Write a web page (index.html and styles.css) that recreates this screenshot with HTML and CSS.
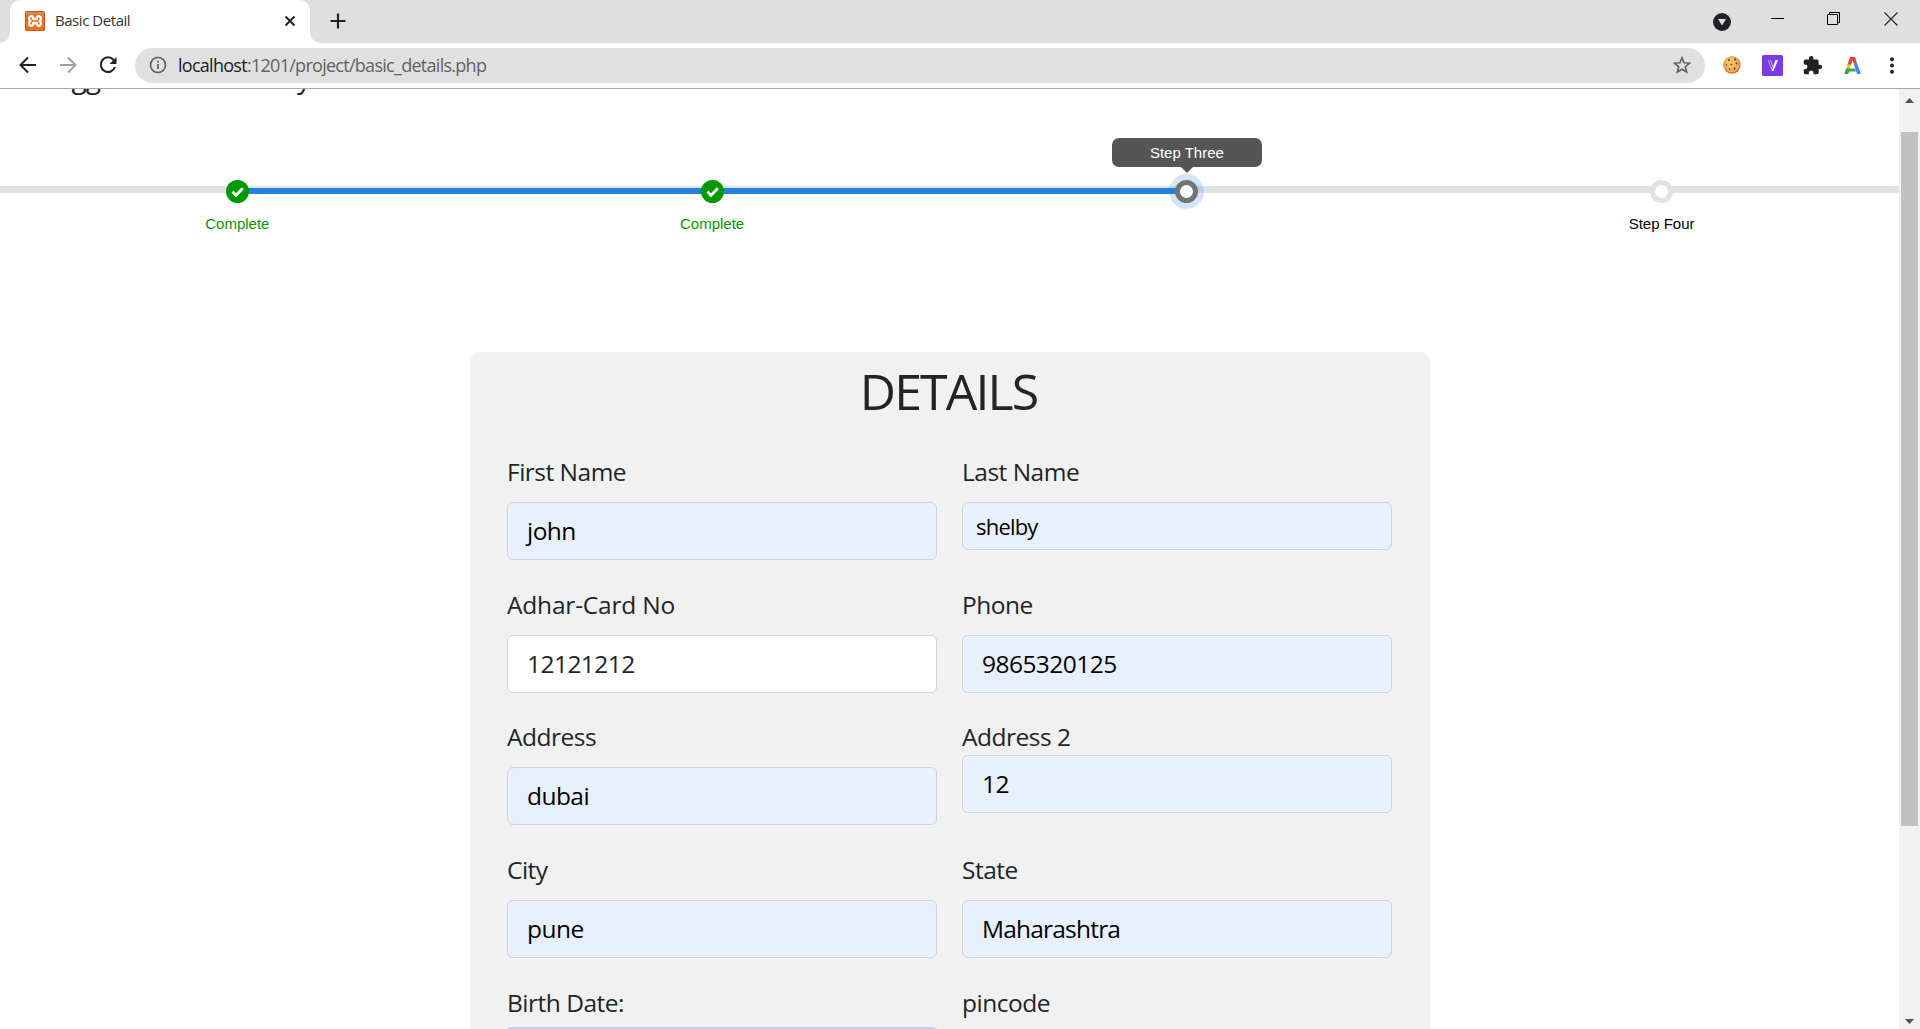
FILE: index.html
```html
<!DOCTYPE html>
<html lang="en">
<head>
<meta charset="utf-8">
<title>Basic Detail</title>
<link rel="stylesheet" href="styles.css">
</head>
<body>
<div class="browser">
  <header class="tabstrip">
    <div class="tab">
      <svg class="favicon" width="20" height="20" viewBox="0 0 20 20"><rect width="20" height="20" rx="1.5" fill="#f0701f"/><rect x=".5" y=".5" width="19" height="19" rx="1.5" fill="none" stroke="#c4571a"/><rect x="1" y="1" width="18" height="2.5" fill="#d98a60"/><path d="M8.200 8V6.500L6.800 5.200H5.500L4.200 6.500v2L5.500 10l-1.300 1.500v2l1.300 1.300h1.300l1.400-1.300V12h3.600v1.500l1.400 1.300h1.300l1.300-1.300v-2L14.500 10l1.300-1.500v-2l-1.300-1.300h-1.300l-1.400 1.300V8z" fill="none" stroke="#fff" stroke-width="2.300" stroke-linejoin="round"/></svg>
      <span class="tab-title">Basic Detail</span>
      <svg class="tab-close" width="12" height="12" viewBox="0 0 12 12"><path d="M1.500 1.500l9 9M10.500 1.500l-9 9" stroke="#202124" stroke-width="2"/></svg>
    </div>
    <svg class="new-tab" width="16" height="16" viewBox="0 0 16 16"><path d="M8 .5v15M.5 8h15" stroke="#202124" stroke-width="2.200"/></svg>
    <div class="window-buttons">
      <svg width="18" height="18" viewBox="0 0 18 18"><circle cx="9" cy="9" r="9" fill="#202124"/><path d="M5 6h8l-4 6.500z" fill="#dfdfdf"/></svg>
      <svg width="13" height="13" viewBox="0 0 13 13"><path d="M0 6.500h13" stroke="#000"/></svg>
      <svg width="13" height="13" viewBox="0 0 13 13"><path d="M.5 2.500h10v10H.5zM2.500 2.500v-2h10v10h-2" fill="none" stroke="#000"/></svg>
      <svg width="14" height="14" viewBox="0 0 14 14"><path d="M.5.5l13 13M13.500.5l-13 13" stroke="#222" stroke-width="1.100"/></svg>
    </div>
  </header>
  <nav class="toolbar">
    <div class="nav-icons">
      <svg width="18" height="18" viewBox="0 0 18 18"><path d="M17 9H2M9 1.500L1.500 9 9 16.500" fill="none" stroke="#202124" stroke-width="2"/></svg>
      <svg width="18" height="18" viewBox="0 0 18 18"><path d="M1 9h15M9 1.500L16.500 9 9 16.500" fill="none" stroke="#9e9fa1" stroke-width="2"/></svg>
      <svg width="18" height="18" viewBox="0 0 18 18"><path d="M14.700 4A7.300 7.300 0 1 0 16 11" fill="none" stroke="#202124" stroke-width="2"/><path d="M17.500 1v7h-7z" fill="#202124"/></svg>
    </div>
    <div class="omnibox">
      <svg width="18" height="18" viewBox="0 0 18 18"><circle cx="9" cy="9" r="7.500" fill="none" stroke="#5f6368" stroke-width="1.700"/><path d="M9 8v5M9 4.700v1.900" stroke="#5f6368" stroke-width="1.800"/></svg>
      <span class="url"><b>localhost</b>:1201/project/basic_details.php</span>
      <svg class="star" width="18" height="18" viewBox="0 0 18 18"><path d="M9 1.800l2 5 5.400.4-4.100 3.500 1.300 5.300L9 13.200 4.400 16l1.300-5.300-4.100-3.500L7 6.800z" fill="none" stroke="#5f6368" stroke-width="1.700"/></svg>
    </div>
    <div class="extensions">
      <svg width="18" height="18" viewBox="0 0 18 18"><circle cx="9" cy="9" r="8.700" fill="#c97929"/><circle cx="8.700" cy="8.300" r="7.900" fill="#edab55"/><circle cx="8" cy="7" r="5.500" fill="#f4bd70"/><g fill="#65361c"><circle cx="6" cy="4" r=".9"/><circle cx="12" cy="3.500" r=".9"/><circle cx="3.500" cy="9" r=".8"/><circle cx="8.500" cy="8.500" r=".8"/><circle cx="13.500" cy="7.500" r=".9"/><circle cx="11.500" cy="12.500" r="1"/><circle cx="6.500" cy="13" r=".8"/></g></svg>
      <svg width="21" height="21" viewBox="0 0 21 21"><rect width="21" height="21" rx="1.500" fill="#7b39ea"/><path d="M6 5l4.500 11M8.500 5l2.500 7" fill="none" stroke="#c9aff8" stroke-width="1"/><path d="M9.500 16L13.500 5H16l-4.500 11z" fill="#fff"/></svg>
      <svg width="21" height="21" viewBox="0 0 24 24"><path fill="#202124" d="M20.500 11H19V7a2 2 0 0 0-2-2h-4V3.500a2.500 2.500 0 0 0-5 0V5H4a2 2 0 0 0-2 2v3.800h1.500a2.700 2.700 0 0 1 0 5.400H2V20a2 2 0 0 0 2 2h3.800v-1.500a2.700 2.700 0 0 1 5.400 0V22H17a2 2 0 0 0 2-2v-4h1.500a2.500 2.500 0 0 0 0-5z"/></svg>
      <svg width="17" height="17" viewBox="0 0 17 17"><path d="M6 0h5l2 6H9.500L8.500 3l-1.500 5H3.500z" fill="#ea4335"/><path d="M9.500 6H13l3.700 11H13z" fill="#4285f4"/><path d="M3.700 7.500H7L4 17H.3z" fill="#fbbc04"/><path d="M2 11.500h9l1 3H5.200L4 17H.3z" fill="#34a853"/></svg>
      <svg width="4" height="17" viewBox="0 0 4 17"><g fill="#202124"><circle cx="2" cy="2.200" r="2"/><circle cx="2" cy="8.500" r="2"/><circle cx="2" cy="14.800" r="2"/></g></svg>
    </div>
  </nav>
  <div class="viewport">
    <main class="page">
      <h3 class="welcome">Logged in Successfully</h3>
      <ol class="steps">
        <li class="step done"><svg class="dot" width="23" height="23" viewBox="0 0 23 23"><circle cx="11.500" cy="11.500" r="11.500" fill="#090"/><path d="M6.500 11.500l3.500 4 6.800-7.300" fill="none" stroke="#fff" stroke-width="2.800"/></svg><span>Complete</span></li>
        <li class="step done"><svg class="dot" width="23" height="23" viewBox="0 0 23 23"><circle cx="11.500" cy="11.500" r="11.500" fill="#090"/><path d="M6.500 11.500l3.500 4 6.800-7.300" fill="none" stroke="#fff" stroke-width="2.800"/></svg><span>Complete</span></li>
        <li class="step active"><i class="dot ring"></i><span class="tooltip">Step Three</span></li>
        <li class="step"><i class="dot ring"></i><span>Step Four</span></li>
      </ol>
      <form class="card">
        <h1>DETAILS</h1>
        <div class="grid">
          <div class="field"><label>First Name</label><div class="input filled">john</div></div>
          <div class="field"><label>Last Name</label><div class="input filled small">shelby</div></div>
          <div class="field"><label class="wide">Adhar-Card No</label><div class="input">12121212</div></div>
          <div class="field"><label>Phone</label><div class="input filled">9865320125</div></div>
          <div class="field"><label>Address</label><div class="input filled">dubai</div></div>
          <div class="field tight"><label>Address 2</label><div class="input filled">12</div></div>
          <div class="field"><label>City</label><div class="input filled">pune</div></div>
          <div class="field"><label>State</label><div class="input filled long">Maharashtra</div></div>
          <div class="field"><label>Birth Date:</label><div class="input focused"></div></div>
          <div class="field"><label>pincode</label><div class="input"></div></div>
        </div>
      </form>
    </main>
    <div class="scrollbar">
      <svg width="9" height="5" viewBox="0 0 9 5"><path d="M0 5L4.500 0 9 5z" fill="#505050"/></svg>
      <div class="thumb"></div>
      <svg class="down" width="9" height="5" viewBox="0 0 9 5"><path d="M0 0l4.500 5L9 0z" fill="#505050"/></svg>
    </div>
  </div>
</div>
</body>
</html>
```
FILE: styles.css
```css
* { box-sizing: border-box; }
body { margin: 0; background: #fff; color: #212529; font-family: "Open Sans", "Noto Sans", sans-serif; }
svg { display: block; flex: none; }

.browser { display: flex; flex-direction: column; height: 1029px; overflow: hidden; }

.tabstrip { display: flex; height: 43px; flex: none; background: #dfdfdf; padding-left: 10px; }
.tab { position: relative; display: flex; align-items: center; width: 300px; height: 43px; padding: 0 14px 1px 15px; background: #fff; border-radius: 10px 10px 0 0; }
.tab::before, .tab::after { content: ""; position: absolute; bottom: 0; width: 10px; height: 10px; }
.tab::before { left: -10px; background: radial-gradient(circle at 0 0, #dfdfdf 9.500px, #fff 10px); }
.tab::after { right: -10px; background: radial-gradient(circle at 100% 0, #dfdfdf 9.500px, #fff 10px); }
.tab-title { margin: -2px 0 0 10px; font-size: 15px; letter-spacing: -.45px; color: #333; }
.tab-close { margin-left: auto; }
.new-tab { margin: 13px 0 0 20px; }
.window-buttons { display: flex; margin-left: auto; padding-right: 22px; }
.window-buttons svg { margin-top: 12px; }
.window-buttons svg:nth-child(1) { margin-top: 13px; margin-right: 40px; }
.window-buttons svg:nth-child(2) { margin-right: 43px; }
.window-buttons svg:nth-child(3) { margin-right: 44px; }

.toolbar { display: flex; align-items: center; height: 46px; flex: none; padding: 0 7px 1px 19px; border-bottom: 1px solid #a9a9a9; }
.nav-icons { display: flex; gap: 22px; width: 116px; }
.omnibox { display: flex; align-items: center; width: 1570px; height: 35px; padding: 0 14px; border-radius: 18px; background: #e0e0e0; }
.url { margin-left: 11px; font-size: 18px; letter-spacing: -.72px; color: #5f6368; }
.url b { font-weight: inherit; color: #202124; }
.star { margin-left: auto; }
.extensions { display: grid; grid-template-columns: repeat(5, 40px); place-items: center; padding-left: 7px; }

.viewport { display: flex; flex: 1; min-height: 0; }
.page { flex: 1; overflow: hidden; }
.welcome { margin: -31px 0 0 42px; height: 40px; line-height: 38px; font-size: 28px; font-weight: 400; letter-spacing: -1px; }

.steps { display: flex; height: 56px; margin: 82px 0 0; padding: 0; list-style: none; font: 15px/20px "Liberation Sans", Arial, sans-serif; color: #000;
  background: linear-gradient(#dfe3e4, #dfe3e4) 0 6px / 100% 7px no-repeat; }
.step { position: relative; flex: 1; display: flex; flex-direction: column; align-items: center; gap: 11px; }
.steps .step:nth-child(-n+2)::after { content: ""; position: absolute; left: 50%; top: 8px; width: 100%; height: 6px; background: #2183dd; }
.done { color: #090; }
.dot { position: relative; z-index: 2; width: 23px; height: 23px; flex: none; }
.ring { border: 5px solid #dfe3e4; border-radius: 50%; background: #fff; }
.active .ring { border-color: #747474; box-shadow: 0 0 0 6px rgba(33,131,221,.2); }
.tooltip { position: absolute; top: -42px; width: 150px; height: 29px; line-height: 29px; border-radius: 7px; background: #555; color: #fff; text-align: center; }
.tooltip::after { content: ""; position: absolute; left: 69px; top: 29px; border: 6px solid transparent; border-top-color: #555; border-bottom: 0; }

.card { width: 960px; margin: 116px auto 0; padding: 8px 37.500px 0; border-radius: 10px; background: #f1f1f1; }
h1 { margin: 0; height: 84px; line-height: 62px; text-align: center; text-indent: -2px; font-size: 50px; font-weight: 400; letter-spacing: -1.900px; }
.grid { display: grid; grid-template-columns: 430px 430px; column-gap: 25px; grid-auto-rows: 132.700px; }
.field { display: flex; flex-direction: column; align-items: stretch; }
label { height: 58px; line-height: 55px; font-size: 24.500px; letter-spacing: -.5px; white-space: nowrap; }
.wide { letter-spacing: -.2px; }
.tight label { margin-bottom: -12px; }
.input { height: 58px; flex: none; padding: 0 19px; line-height: 56px; border: 1px solid #ced4da; border-radius: 6px; background: #fff; color: #212529; font-size: 24.500px; letter-spacing: -.55px; }
.filled { background: #e8f0fe; color: #000; }
.long { letter-spacing: -.8px; }
.small { height: 48px; line-height: 46px; padding: 0 13px; font-size: 22px; letter-spacing: -.8px; }
.focused { margin-top: -2px; border-color: #86b7fe; box-shadow: 0 0 0 4px #b8d2f8; }

.scrollbar { display: flex; flex-direction: column; align-items: center; width: 21px; padding: 9px 0 5px; background: #f1f1f1; }
.thumb { width: 17px; height: 694px; margin-top: 29px; background: #c1c1c1; }
.down { margin-top: auto; }
```
